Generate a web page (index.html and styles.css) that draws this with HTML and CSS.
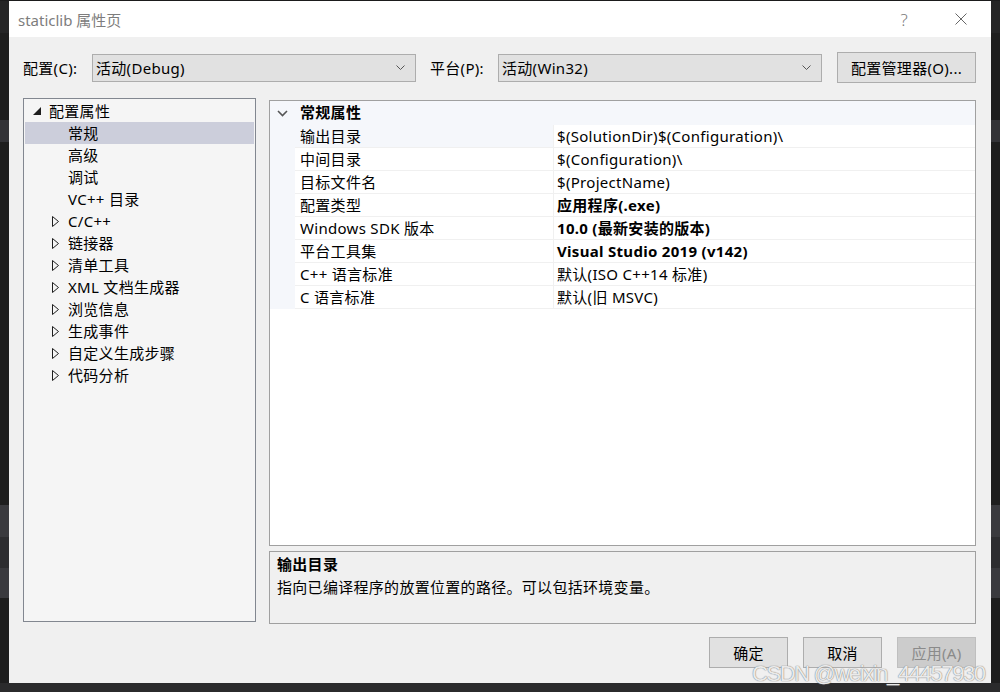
FILE: index.html
```html
<!DOCTYPE html>
<html lang="zh-CN">
<head>
    <meta charset="UTF-8">
    <title>staticlib 属性页</title>
    <link rel="stylesheet" href="styles.css">
</head>
<body>
<div class="screen">
    <div class="dialog">
        <div class="titlebar">
            <span class="title">staticlib 属性页</span>
            <span class="help">?</span>
            <svg class="close" width="12" height="12" viewBox="0 0 12 12">
                <path d="M0.5 0.5 L11.5 11.5 M11.5 0.5 L0.5 11.5" stroke="#666" stroke-width="1" fill="none"/>
            </svg>
        </div>

        <div class="content">
            <div class="config-row">
                <span class="label label-config">配置(C):</span>
                <div class="combo">
                    <span class="combo-text">活动(Debug)</span>
                    <svg class="chevron" width="9" height="5" viewBox="0 0 9 5"><path d="M0.5 0.5 L4.5 4.5 L8.5 0.5" stroke="#555" fill="none"/></svg>
                </div>
                <span class="label label-platform">平台(P):</span>
                <div class="combo">
                    <span class="combo-text">活动(Win32)</span>
                    <svg class="chevron" width="9" height="5" viewBox="0 0 9 5"><path d="M0.5 0.5 L4.5 4.5 L8.5 0.5" stroke="#555" fill="none"/></svg>
                </div>
                <button class="btn btn-manager">配置管理器(O)...</button>
            </div>

            <div class="main">
                <div class="tree">
                    <div class="tree-row level-0">
                        <span class="twisty"><svg width="8" height="8" viewBox="0 0 8 8"><polygon points="8,0 8,8 0,8" fill="#1e1e1e"/></svg></span>
                        <span>配置属性</span>
                    </div>
                    <div class="tree-row level-1 selected"><span class="twisty"></span><span>常规</span></div>
                    <div class="tree-row level-1"><span class="twisty"></span><span>高级</span></div>
                    <div class="tree-row level-1"><span class="twisty"></span><span>调试</span></div>
                    <div class="tree-row level-1"><span class="twisty"></span><span>VC++ 目录</span></div>
                    <div class="tree-row level-1"><span class="twisty"><svg width="8" height="11" viewBox="0 0 8 11"><polygon points="0.5,0.5 6.5,5.5 0.5,10.5" fill="none" stroke="#1e1e1e"/></svg></span><span>C/C++</span></div>
                    <div class="tree-row level-1"><span class="twisty"><svg width="8" height="11" viewBox="0 0 8 11"><polygon points="0.5,0.5 6.5,5.5 0.5,10.5" fill="none" stroke="#1e1e1e"/></svg></span><span>链接器</span></div>
                    <div class="tree-row level-1"><span class="twisty"><svg width="8" height="11" viewBox="0 0 8 11"><polygon points="0.5,0.5 6.5,5.5 0.5,10.5" fill="none" stroke="#1e1e1e"/></svg></span><span>清单工具</span></div>
                    <div class="tree-row level-1"><span class="twisty"><svg width="8" height="11" viewBox="0 0 8 11"><polygon points="0.5,0.5 6.5,5.5 0.5,10.5" fill="none" stroke="#1e1e1e"/></svg></span><span>XML 文档生成器</span></div>
                    <div class="tree-row level-1"><span class="twisty"><svg width="8" height="11" viewBox="0 0 8 11"><polygon points="0.5,0.5 6.5,5.5 0.5,10.5" fill="none" stroke="#1e1e1e"/></svg></span><span>浏览信息</span></div>
                    <div class="tree-row level-1"><span class="twisty"><svg width="8" height="11" viewBox="0 0 8 11"><polygon points="0.5,0.5 6.5,5.5 0.5,10.5" fill="none" stroke="#1e1e1e"/></svg></span><span>生成事件</span></div>
                    <div class="tree-row level-1"><span class="twisty"><svg width="8" height="11" viewBox="0 0 8 11"><polygon points="0.5,0.5 6.5,5.5 0.5,10.5" fill="none" stroke="#1e1e1e"/></svg></span><span>自定义生成步骤</span></div>
                    <div class="tree-row level-1"><span class="twisty"><svg width="8" height="11" viewBox="0 0 8 11"><polygon points="0.5,0.5 6.5,5.5 0.5,10.5" fill="none" stroke="#1e1e1e"/></svg></span><span>代码分析</span></div>
                </div>

                <div class="right">
                    <div class="grid">
                        <div class="grid-header">
                            <span class="gutter"><svg width="11" height="7" viewBox="0 0 11 7"><path d="M1 1 L5.5 5.5 L10 1" stroke="#555" stroke-width="1.6" fill="none"/></svg></span>
                            <span class="header-text">常规属性</span>
                        </div>
                        <div class="grid-row">
                            <span class="gutter"></span>
                            <span class="name selected">输出目录</span>
                            <span class="value">$(SolutionDir)$(Configuration)\</span>
                        </div>
                        <div class="grid-row">
                            <span class="gutter"></span>
                            <span class="name">中间目录</span>
                            <span class="value">$(Configuration)\</span>
                        </div>
                        <div class="grid-row">
                            <span class="gutter"></span>
                            <span class="name">目标文件名</span>
                            <span class="value">$(ProjectName)</span>
                        </div>
                        <div class="grid-row">
                            <span class="gutter"></span>
                            <span class="name">配置类型</span>
                            <span class="value bold">应用程序(.exe)</span>
                        </div>
                        <div class="grid-row">
                            <span class="gutter"></span>
                            <span class="name">Windows SDK 版本</span>
                            <span class="value bold">10.0 (最新安装的版本)</span>
                        </div>
                        <div class="grid-row">
                            <span class="gutter"></span>
                            <span class="name">平台工具集</span>
                            <span class="value bold">Visual Studio 2019 (v142)</span>
                        </div>
                        <div class="grid-row">
                            <span class="gutter"></span>
                            <span class="name">C++ 语言标准</span>
                            <span class="value">默认(ISO C++14 标准)</span>
                        </div>
                        <div class="grid-row">
                            <span class="gutter"></span>
                            <span class="name">C 语言标准</span>
                            <span class="value">默认(旧 MSVC)</span>
                        </div>
                    </div>
                    <div class="desc">
                        <div class="desc-title">输出目录</div>
                        <div class="desc-text">指向已编译程序的放置位置的路径。可以包括环境变量。</div>
                    </div>
                </div>
            </div>

            <div class="footer">
                <button class="btn">确定</button>
                <button class="btn">取消</button>
                <button class="btn disabled">应用(A)</button>
            </div>
        </div>
    </div>
    <div class="watermark">CSDN @weixin_44457930</div>
</div>
</body>
</html>
```

FILE: styles.css
```css
body {
    margin: 0;
    background: #1e1e1e;
    font-family: "Noto Sans", "Noto Sans CJK SC", sans-serif;
    font-size: 15px;
    letter-spacing: 0.3px;
    color: #000;
}
.screen {
    position: relative;
    width: 1000px;
    height: 692px;
    box-sizing: border-box;
    padding: 1px 9px 0 9px;
    overflow: hidden;
    /* editor behind the dialog */
    background: linear-gradient(to bottom,
        #1b1b1c 0, #1b1b1c 1px,
        #252526 1px, #252526 33px,
        #1e1e1e 33px, #1e1e1e 120px,
        #333337 120px, #333337 142px,
        #1e1e1e 142px, #1e1e1e 505px,
        #3a3a3e 505px, #3a3a3e 537px,
        #2d2d30 537px, #2d2d30 568px,
        #3a3a3e 568px, #3a3a3e 598px,
        #1e1e1e 598px, #1e1e1e 683px,
        #2b2b2c 683px);
}
.dialog {
    width: 982px;
    height: 682px;
    background: #f0f0f0;
    display: flex;
    flex-direction: column;
}
.titlebar {
    height: 36px;
    flex: none;
    background: #fff;
    display: flex;
    align-items: center;
    padding: 0 24px 0 9px;
}
.title {
    flex: 1;
    color: #7d7d7d;
    letter-spacing: 0;
}
.help {
    color: #7a7a7a;
    font-size: 17px;
    font-weight: 300;
    margin-right: 47px;
}
.content {
    flex: 1;
    display: flex;
    flex-direction: column;
    padding: 15px 15px 15px 14px;
}
.config-row {
    display: flex;
    align-items: center;
    height: 31px;
}
.label-config {
    width: 69px;
}
.label-platform {
    width: 68px;
    margin-left: 14px;
}
.combo {
    width: 324px;
    height: 28px;
    box-sizing: border-box;
    border: 1px solid #adadad;
    background: #e1e1e1;
    display: flex;
    align-items: center;
    padding: 0 10px 0 3px;
}
.combo-text {
    flex: 1;
}
.btn {
    font-family: inherit;
    font-size: 15px;
    letter-spacing: inherit;
    color: #000;
    background: #e1e1e1;
    border: 1px solid #adadad;
    height: 31px;
    width: 79px;
    padding: 0;
    box-sizing: border-box;
}
.btn-manager {
    width: 139px;
    margin-left: 15px;
}
.btn.disabled {
    background: #cccccc;
    border-color: #bfbfbf;
    color: #8a8a8a;
}
.main {
    display: flex;
    gap: 13px;
    height: 526px;
    margin-top: 15px;
}
.tree {
    width: 233px;
    height: 524px;
    box-sizing: border-box;
    border: 1px solid #828790;
    background: #f5f5f5;
    padding: 1px;
}
.tree-row {
    height: 22px;
    display: flex;
    align-items: center;
    line-height: 20px;
}
.tree-row.level-0 {
    padding-left: 4px;
}
.tree-row.level-1 {
    padding-left: 23px;
}
.tree-row.selected {
    background: #cccedb;
}
.twisty {
    width: 16px;
    height: 22px;
    margin-right: 4px;
    display: flex;
    align-items: center;
    justify-content: center;
}
.right {
    flex: 1;
    display: flex;
    flex-direction: column;
}
.grid {
    margin-top: 2px;
    height: 446px;
    box-sizing: border-box;
    border: 1px solid #a0a0a0;
    background: #fff;
}
.grid-header {
    height: 24px;
    display: flex;
    align-items: center;
    background: #f5f7fb;
}
.header-text {
    font-weight: bold;
    padding-left: 5px;
    line-height: 20px;
    margin-bottom: 3px;
}
.gutter {
    width: 25px;
    height: 100%;
    flex: none;
    display: flex;
    align-items: center;
    justify-content: center;
    background: #f5f7fb;
}
.grid-row {
    height: 23px;
    display: flex;
    align-items: center;
    box-sizing: border-box;
    border-bottom: 1px solid #f0f0f0;
    line-height: 20px;
}
.grid-row .gutter {
    height: 23px;
    margin-bottom: -1px;
}
.name {
    width: 259px;
    height: 100%;
    box-sizing: border-box;
    padding: 0 0 1px 5px;
    border-right: 1px solid #f0f0f0;
    display: flex;
    align-items: center;
}
.name.selected {
    background: #f5f7fb;
}
.value {
    padding: 0 0 1px 3px;
}
.bold {
    font-weight: bold;
}
.desc {
    margin-top: 5px;
    height: 73px;
    box-sizing: border-box;
    border: 1px solid #a0a0a0;
    padding: 1px 7px;
    line-height: 23px;
}
.desc-title {
    font-weight: bold;
}
.footer {
    display: flex;
    justify-content: flex-end;
    gap: 15px;
    margin-top: 13px;
}
.watermark {
    position: absolute;
    left: 752px;
    top: 663px;
    font-family: "Liberation Sans", Arial, sans-serif;
    font-size: 22px;
    line-height: 22px;
    letter-spacing: -1.4px;
    color: rgba(255, 255, 255, 0.85);
    text-shadow: 0 0 1px #777, 0 0 1px #999;
    white-space: nowrap;
}
```
